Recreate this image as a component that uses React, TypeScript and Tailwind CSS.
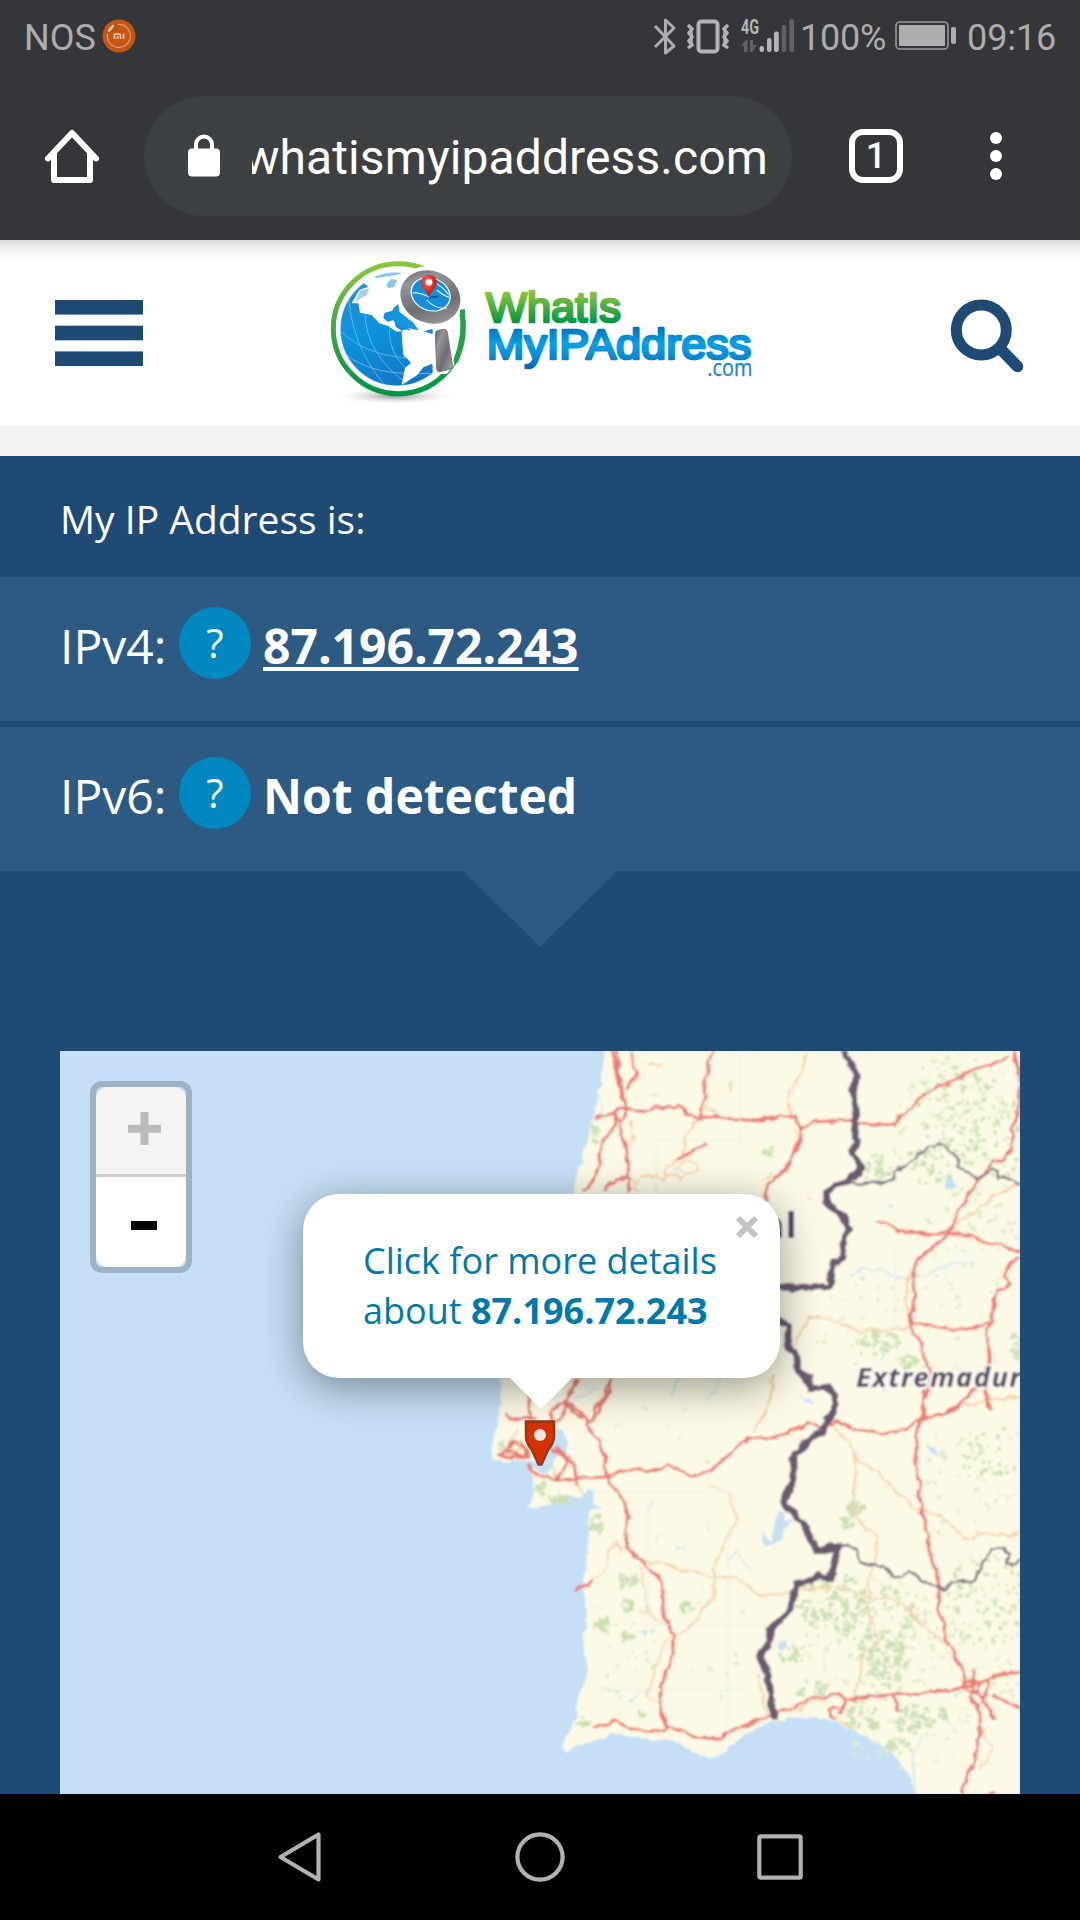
import React from "react";

/* ---------- status bar ---------- */

function StatusIcons() {
  return (
    <svg width="146" height="40" viewBox="651 16 146 40" fill="none" className="shrink-0">
      <path d="M655 26L674 46L665.5 53V20L674 28L655 47" stroke="#adadaf" strokeWidth="3" strokeLinejoin="round" />
      <rect x="698.5" y="21.5" width="19" height="30" rx="3" stroke="#b4b4b6" strokeWidth="4" />
      <path d="M688 25l4 4-3 4 3 4-3 4 3 4-4 3M728 25l-4 4 3 4-3 4 3 4-3 4 4 3" stroke="#b4b4b6" strokeWidth="3.4" />
      <path d="M692 28v19M724 28v19" stroke="#b4b4b6" strokeWidth="1.6" />
      <text x="741" y="34" fontFamily="Roboto" fontWeight="700" fontSize="20" textLength="18" lengthAdjust="spacingAndGlyphs" fill="#b4b4b6">4G</text>
      <path d="M741 46l5-6h1.500v12h-3.500v-6zM750 40h3v5h4l-5 7h-2z" fill="#616265" />
      <g fill="#b4b4b6">
        <rect x="759.500" y="46" width="4.500" height="6" rx="2" />
        <rect x="767" y="38" width="4.500" height="14" rx="2" />
        <rect x="774" y="31.500" width="4.800" height="20.500" rx="2" />
      </g>
      <g fill="#616265">
        <rect x="781.700" y="25" width="4.600" height="27" rx="2" />
        <rect x="789.300" y="19" width="4.800" height="33" rx="2" />
      </g>
    </svg>
  );
}

function Battery() {
  return (
    <svg width="62" height="30" viewBox="0 0 62 30" fill="none" className="shrink-0">
      <rect x="1" y="1" width="52" height="27" rx="4" stroke="#9a9a9c" strokeWidth="1.600" />
      <rect x="4" y="4" width="46" height="21" rx="1" fill="#adaeb0" />
      <rect x="56" y="6" width="5" height="17" rx="2" fill="#adaeb0" />
    </svg>
  );
}

function StatusBar() {
  return (
    <div className="flex h-[72px] items-center pl-[24px] text-[36px] leading-[72px] text-[#adadaf]">
      <span className="w-[74px] pt-[3px]">NOS</span>
      <svg width="34" height="34" viewBox="0 0 34 34" fill="none" className="ml-[4px] shrink-0">
        <circle cx="17" cy="17" r="16.500" fill="#c45513" />
        <path d="M16 5.500a11.500 11.500 0 1 1-10.500 9.500" stroke="#d99a74" strokeWidth="1.300" />
        <path d="M7 11.500l4-4.500" stroke="#e8d5c8" strokeWidth="2.500" strokeLinecap="round" />
        <path d="M12.500 20v-5h4.500q1.500 0 1.500 1.500V20M15.500 17v3M21.500 14.500V20" stroke="#e6cdbd" strokeWidth="1.600" />
      </svg>
      <div className="ml-[515px]"><StatusIcons /></div>
      <span className="ml-[3px] w-[95px] pt-[3px] tracking-[-0.2px]">100%</span>
      <Battery />
      <span className="ml-[10px] pt-[3px] tracking-[-0.1px]">09:16</span>
    </div>
  );
}

/* ---------- browser toolbar ---------- */

function BrowserBar() {
  return (
    <div className="flex h-[168px] items-center pb-0 pl-[42px]">
      <svg width="60" height="60" viewBox="42 126 60 60" fill="none" className="shrink-0">
        <path d="M48 158.500L72 133l24 25.500" stroke="#fff" strokeWidth="6" strokeLinecap="round" strokeLinejoin="round" />
        <path d="M54 153v27h36v-27" stroke="#fff" strokeWidth="6" strokeLinejoin="round" />
      </svg>
      <div className="ml-[42px] flex h-[120px] w-[648px] items-center rounded-full bg-[#3c4043] pl-[44px]">
        <svg width="32" height="44" viewBox="0 0 32 44" fill="none" className="shrink-0">
          <path d="M8 16V10.500a8 8 0 0 1 16 0V16" stroke="#fff" strokeWidth="4" />
          <rect x="0" y="14.500" width="32" height="28" rx="4" fill="#fff" />
        </svg>
        <div className="ml-[32px] flex w-[516px] justify-end overflow-hidden text-[48px] leading-[80px] text-white">
          <span className="whitespace-nowrap pt-[4px] tracking-[0.1px]">whatismyipaddress.com</span>
        </div>
      </div>
      <div className="ml-[57px] flex h-[54px] w-[54px] items-center justify-center rounded-[14px] border-[6px] border-white text-[36px] font-medium leading-none text-white">
        1
      </div>
      <div className="ml-[87px] flex flex-col gap-[6px]">
        <i className="h-3 w-3 rounded-full bg-white" />
        <i className="h-3 w-3 rounded-full bg-white" />
        <i className="h-3 w-3 rounded-full bg-white" />
      </div>
    </div>
  );
}

/* ---------- site header ---------- */

function Logo() {
  return (
    <svg width="480" height="180" viewBox="0 0 1440 540" className="shrink-0">
      <defs>
        <linearGradient id="ring" x1="0" y1="0" x2="0" y2="1">
          <stop offset="0" stopColor="#8cc63f" /><stop offset=".5" stopColor="#3fa648" /><stop offset="1" stopColor="#009444" />
        </linearGradient>
        <linearGradient id="ocean" x1="0" y1="0" x2=".4" y2="1">
          <stop offset="0" stopColor="#2f8bd6" /><stop offset=".55" stopColor="#0a93dc" /><stop offset="1" stopColor="#1478c8" />
        </linearGradient>
        <linearGradient id="steel" x1="0" y1="0" x2="1" y2="1">
          <stop offset="0" stopColor="#58595b" /><stop offset=".25" stopColor="#939598" /><stop offset=".6" stopColor="#6d6e71" /><stop offset="1" stopColor="#a7a9ac" />
        </linearGradient>
        <linearGradient id="green" gradientUnits="userSpaceOnUse" x1="0" y1="155" x2="0" y2="250">
          <stop offset="0" stopColor="#8cc63f" /><stop offset="1" stopColor="#009444" />
        </linearGradient>
        <linearGradient id="blue" gradientUnits="userSpaceOnUse" x1="0" y1="262" x2="0" y2="385">
          <stop offset="0" stopColor="#0071bc" /><stop offset=".4" stopColor="#0a9fe3" /><stop offset=".65" stopColor="#0b8fd8" /><stop offset="1" stopColor="#0069b4" />
        </linearGradient>
        <radialGradient id="shade"><stop offset="0" stopColor="#777" stopOpacity=".8" /><stop offset="1" stopColor="#fff" stopOpacity="0" /></radialGradient>
        <radialGradient id="red" cx=".4" cy=".3"><stop offset="0" stopColor="#ff6a5a" /><stop offset="1" stopColor="#cf1f1f" /></radialGradient>
        <clipPath id="disc"><circle cx="291" cy="267" r="171" /></clipPath>
      </defs>
      <ellipse cx="285" cy="468" rx="185" ry="27" fill="url(#shade)" />
      <circle cx="295" cy="266" r="195" fill="#fff" stroke="url(#ring)" strokeWidth="15" />
      <g clipPath="url(#disc)">
        <circle cx="291" cy="267" r="171" fill="url(#ocean)" />
        <g fill="none" stroke="#6fbcec" strokeWidth="2.500">
          <path d="M145 150Q150 310 250 430M195 215Q195 340 320 430M270 260Q260 340 335 400M125 275Q200 350 340 355M140 345Q220 410 390 400" />
        </g>
        <path d="M155 190L178 150L205 140L185 125L240 105L305 95L420 60L480 270L390 268L368 277L335 272L320 262L306 238L288 222L292 195L277 212L254 218L250 234L262 245L282 240L287 260L305 272L320 268L345 280L350 292L315 290L310 273L290 275L264 258L238 250L215 225L180 218L175 190Z" fill="#fff" />
        <path d="M305 275L345 268L410 285L480 300L450 420L395 372L370 382L352 405L320 425L305 435L315 385L333 368L310 345L307 310Z" fill="#fff" />
        <path d="M165 190L180 152L208 145L200 165L178 178Z" fill="#a9cdee" />
        <path d="M258 135l15-18 18 3-8 20-18 5zM225 105l45-8 40 1-22 7-60 10z" fill="#8dc3ec" />
        <path d="M280 205l15-14 3 25 38 27 20 28-38-8-26-10-20-20z" fill="#1596dc" />
      </g>
      <circle cx="291" cy="267" r="171" fill="none" stroke="#fff" strokeWidth="5" opacity=".5" />
      <ellipse cx="391" cy="171" rx="102" ry="91" transform="rotate(18 391 171)" fill="#fff" />
      <path d="M378 82L400 90L412 70L490 118L494 205L460 245L463 375L440 402L398 402L398 240Z" fill="#fff" />
      <path d="M487 208Q497 285 467 366" fill="none" stroke="#23a146" strokeWidth="15" />
      <ellipse cx="391" cy="171" rx="92" ry="78" transform="rotate(22 391 171)" fill="url(#steel)" />
      <ellipse cx="392" cy="163" rx="62" ry="50" transform="rotate(22 392 163)" fill="#fff" />
      <ellipse cx="392" cy="163" rx="58" ry="47" transform="rotate(22 392 163)" fill="#168fd8" />
      <path d="M338 158Q370 160 388 172M380 180Q400 204 440 206M400 126Q430 140 446 165M410 150Q432 168 448 172" fill="none" stroke="#d7effb" strokeWidth="3.500" />
      <path d="M387 173l28-4" stroke="#175b8d" strokeWidth="5" />
      <path d="M387 173C380 151 363 145 363 127A24 23 0 0 1 411 127C411 145 393 150 387 173Z" fill="url(#red)" />
      <circle cx="387" cy="127" r="10" fill="#fff" />
      <path d="M406 281Q406 273 414 271L434 268Q441 269 442 277L457 375Q458 386 449 388L419 395Q410 395 410 386Z" fill="url(#steel)" stroke="#77787b" strokeWidth="3" />
      <g fontFamily="Liberation Sans" strokeLinejoin="round" strokeLinecap="round">
        <text x="558" y="247" fontSize="126" textLength="405" lengthAdjust="spacingAndGlyphs" fill="url(#green)" stroke="url(#green)" strokeWidth="8">WhatIs</text>
        <text x="560" y="358" fontSize="126" textLength="794" lengthAdjust="spacingAndGlyphs" fill="url(#blue)" stroke="url(#blue)" strokeWidth="8">MyIPAddress</text>
      </g>
      <text x="1222" y="409" fontFamily="Open Sans" fontSize="70" textLength="135" lengthAdjust="spacingAndGlyphs" fill="#1b86cb" stroke="#1b86cb" strokeWidth="1">.com</text>
    </svg>
  );
}

function SiteHeader() {
  return (
    <header className="flex h-[186px] items-start bg-white bg-[linear-gradient(to_bottom,#dadada_0px,#efefef_7px,#fafafa_15px,#ffffff_23px)]">
      <svg width="88" height="66" viewBox="0 0 88 66" fill="#1f4a73" className="ml-[55px] mt-[60px] shrink-0">
        <rect width="88" height="14.600" />
        <rect y="25.700" width="88" height="14.600" />
        <rect y="51.400" width="88" height="14.600" />
      </svg>
      <div className="ml-[157px]"><Logo /></div>
      <svg width="76" height="76" viewBox="950 299 76 76" fill="none" stroke="#1f4a73" className="ml-[170px] mt-[59px] shrink-0">
        <circle cx="981.300" cy="330" r="25" strokeWidth="11" />
        <path d="M1001 349.500L1017.500 366.500" strokeWidth="11.500" strokeLinecap="round" />
      </svg>
    </header>
  );
}

/* ---------- address rows ---------- */

function AddressRow({ label, children }: { label: string; children: React.ReactNode }) {
  return (
    <div className="flex h-[144px] items-start bg-[#2d5a82] pl-[60px] text-[48px] text-white">
      <span className="w-[119px] whitespace-nowrap pt-[29px] font-normal leading-[80px]">{label}</span>
      <span className="mt-[30px] flex h-[72px] w-[72px] shrink-0 items-center justify-center rounded-full bg-[#0288c0] text-[40px] font-normal leading-none">?</span>
      <span className="ml-[12px] whitespace-nowrap pt-[29px] font-bold leading-[80px]">{children}</span>
    </div>
  );
}

/* ---------- map ---------- */

type Blob = [number, number, number, number, number];

/* Scatters woodland specks inside ellipses: cx, cy, rx, ry, count. */
function specks(blobs: Blob[], seed: number) {
  let s = seed;
  const rnd = () => (s = (s * 16807) % 2147483647) / 2147483647;
  let d = "";
  for (const [cx, cy, rx, ry, n] of blobs) {
    for (let i = 0; i < n; i++) {
      const a = rnd() * Math.PI * 2;
      const r = Math.sqrt(rnd());
      const w = 1.5 + rnd() * 3.5;
      const h = 1.5 + rnd() * 3;
      d += `M${(cx + Math.cos(a) * r * rx).toFixed(1)} ${(cy + Math.sin(a) * r * ry).toFixed(1)}l${w.toFixed(1)} -1l1 ${h.toFixed(1)}l-${w.toFixed(1)} 1z`;
    }
  }
  return d;
}

const denseWoods = specks([
  [956, 1115, 46, 50, 90], [880, 1165, 22, 18, 36], [1000, 1140, 26, 40, 40], [925, 1165, 30, 18, 36],
  [830, 1600, 36, 28, 110], [880, 1625, 40, 40, 100], [885, 1660, 20, 26, 90], [810, 1690, 16, 12, 26],
  [910, 1718, 22, 14, 50], [860, 1715, 18, 14, 40], [790, 1655, 14, 10, 20], [985, 1600, 40, 50, 80],
  [990, 1450, 30, 28, 34], [874, 1342, 26, 12, 40], [905, 1362, 10, 8, 26], [852, 1507, 8, 7, 24],
  [844, 1522, 8, 8, 16], [767, 1151, 6, 5, 18], [625, 1580, 10, 8, 26], [626, 1605, 8, 6, 16], [600, 1625, 8, 12, 22],
  [594, 1524, 8, 12, 18], [625, 1637, 8, 6, 12], [685, 1607, 6, 5, 14], [594, 1133, 4, 12, 22], [580, 1722, 8, 4, 12],
  [540, 1487, 5, 7, 16], [557, 1498, 12, 4, 22], [500, 1445, 5, 5, 12], [897, 1745, 14, 8, 18], [940, 1712, 5, 5, 14],
  [640, 1713, 4, 4, 8], [1016, 1345, 8, 14, 20],
], 4711);

const sparseWoods = specks([
  [955, 1110, 62, 56, 110], [960, 1250, 55, 60, 50], [900, 1330, 90, 60, 54], [980, 1650, 40, 80, 90],
  [870, 1640, 72, 66, 130], [960, 1480, 55, 60, 50], [620, 1640, 35, 60, 36], [900, 1740, 60, 30, 46],
  [730, 1640, 50, 60, 10], [680, 1440, 80, 40, 6], [980, 1210, 40, 30, 20],
], 977);

/* North block is charted on a 3:1 grid from (560,1040), south block on a 2.8:3 grid from (460,1380). */
const NORTH = "translate(560 1040) scale(0.33333)";
const SOUTH = "translate(460 1380) scale(0.35714 0.33333)";

const northRoads = [
  "M160 30L168 85L178 130L188 180L195 205", "M213 33L218 75L232 100L210 130L200 150",
  "M172 33L177 95L190 170", "M460 33L445 75L432 120L438 170L422 200L425 238",
  "M102 235L130 228L160 220L175 205L195 203L250 215L285 205L345 200L360 192L372 200L380 222L425 238L460 222L500 235L590 243L650 232L705 230L712 250L725 265L765 245L885 240L888 250L995 255L1005 258L1020 232L1045 210L1070 182L1100 158L1165 132L1220 100L1300 70L1350 50",
  "M175 208Q155 230 180 245Q200 225 195 205", "M162 225L165 255L128 310L117 345L118 385L95 430L68 460",
  "M178 250L182 285L205 340L206 460", "M132 460L138 440L165 420L200 412L215 420",
  "M725 265L722 295L700 350L680 385L650 410L620 440L620 485", "M355 360L440 310",
  "M1360 33L1380 110L1378 200L1360 260L1355 330L1330 357L1300 362L1275 400L1245 432L1220 475L1195 520L1180 550L1165 580L1080 655L1060 695L1065 760L1050 850L1062 885L1085 905L1090 945L1110 1000L1105 1050L1092 1080L1090 1130",
  "M950 545L975 553L1020 575L1080 578L1120 585L1160 575L1230 588L1275 610L1320 613L1380 632",
  "M1380 650L1340 685L1335 705L1350 730L1330 745L1310 752L1298 775L1295 845L1270 855L1240 865L1180 868L1110 855L1055 850",
  "M1295 840L1275 880L1285 920L1288 960L1280 1010L1240 1045L1190 1105L1160 1125L1080 1128",
  "M1280 1050L1282 1100L1298 1110", "M155 1015L150 1045L130 1080L120 1110L100 1140M50 1015L25 1070L10 1090L70 1140",
];
const southRoads = [
  "M190 0L195 120M335 0L305 30L300 70L272 75L255 95L255 130M300 70L285 115L265 125M300 70L335 95L358 130L372 115L380 80L403 55L410 20L425 0",
  "M125 100L140 118L190 112L215 118", "M108 225L130 215L150 180L165 200L185 210L195 235L110 228M130 215L195 235M170 178L190 235",
  "M190 255L205 275L235 290L265 300L420 290L470 270L560 268L580 250L600 262L645 287L705 272L740 235L785 190L820 172L865 178L910 162L975 130L1010 140L1060 125L1090 145L1130 150L1180 162L1240 148L1275 130L1300 108L1360 105L1400 70L1430 35L1450 20",
  "M255 205L290 230L310 232L320 260L330 320M305 235L290 270L265 300M268 200L300 235",
  "M358 130L362 150L390 180L400 210L410 240L405 280L430 320L460 365L472 410L462 450L465 505L510 545L550 585L565 620L572 700L588 750L600 775L590 850L565 910L562 980L580 1040L570 1052L500 1050L465 1040L435 1022L375 1045",
  "M580 1040L620 1055L655 1070L725 1078L750 1055L810 1030L875 1000L945 980L975 955L1020 952L1060 937L1085 962L1200 942L1290 940L1410 925L1440 910L1480 900L1520 882L1570 870",
  "M1070 940L1080 965L1065 1005M1065 980L1045 978L1033 990L1035 1010L1055 1018", "M1215 940L1228 995",
  "M1300 30L1295 105L1282 150L1275 235L1285 300L1292 390L1310 460L1322 545L1338 600L1340 690L1360 735L1357 770L1380 810L1400 860L1420 915",
  "M1440 865L1435 930L1455 940L1500 1018M1430 930L1435 965L1458 1000L1455 1060L1440 1150L1410 1210L1405 1250M1480 900L1475 940L1460 970M1490 945L1568 985",
  "M1412 905L1455 905L1450 940L1415 935Z", "M320 628L345 622L372 605", "M1470 0L1475 60L1485 90", "M1478 1240l20 2",
];
const northMinor = [
  "M740 33L735 80L715 110L685 160L688 200L690 230", "M265 72h42M512 120v40", "M215 240L212 320M225 285L218 300",
  "M430 230L400 250L375 290L372 330L355 360L320 380L312 405M228 430L240 408L290 410L310 420L320 405L350 403L362 420L380 398L415 392L410 370L375 365L350 385M220 420L225 445L240 455",
  "M460 215L435 200L430 225L460 230M210 130L240 110M700 265L715 290", "M640 395L618 420", "M740 477h15",
  "M700 920L725 870L745 835L795 828L850 855L895 875L1050 862L1080 850M1060 690L1040 720L1035 770L1050 830",
  "M635 1000L640 1060L605 1140M1380 430L1300 470L1240 520L1170 560M1190 1090L1240 1095L1275 1080L1380 1072",
];
const southMinor = [
  "M865 0L878 45L850 100L820 155", "M695 310L755 345L762 380L782 420L745 475L735 510L712 555L708 655L670 700L640 745L600 775",
  "M372 605L410 565L415 510L435 495L460 505M440 485L450 520", "M520 545L570 550L620 570L665 575L705 592L770 592L830 642L880 648L935 635L1040 620L1100 635L1165 655L1210 655L1250 680L1290 730L1370 800",
  "M505 560L520 630L525 700L575 735M575 780L545 870L540 905L520 945L562 975",
  "M1050 140L1090 185L1110 235L1170 275L1220 330L1275 385L1345 410L1415 475L1470 462L1540 465L1568 455",
  "M1110 235L1105 310L1100 370L1125 430L1165 470L1168 520L1145 600L1145 680L1158 750L1175 790L1130 820L1115 905L1100 945",
  "M835 875L840 930L860 1000M875 1000L960 990L975 965L1030 965M1460 1050L1490 1100L1480 1140L1450 1165M1060 1020L1100 1045",
  "M190 255L215 290M265 290L262 260M160 150L148 180L178 210L150 215M330 310L340 340M590 770L570 785",
];

function Roads({ paths, color, width }: { paths: string[]; color: string; width: number }) {
  return (
    <g fill="none" stroke={color} strokeWidth={width} strokeLinejoin="round">
      {paths.map((d) => <path key={d} d={d} vectorEffect="non-scaling-stroke" />)}
    </g>
  );
}

function MapCanvas() {
  return (
    <svg width="960" height="743" viewBox="60 1051 960 743" className="block">
      <defs>
        <filter id="soft" x="0" y="0" width="1" height="1"><feGaussianBlur stdDeviation="0.9" /></filter>
        {/* Slight wobble so that coast, borders and roads read as surveyed lines. */}
        <filter id="survey" filterUnits="userSpaceOnUse" x="60" y="1051" width="960" height="743">
          <feTurbulence type="fractalNoise" baseFrequency="0.09" numOctaves="2" seed="5" result="n" />
          <feDisplacementMap in="SourceGraphic" in2="n" scale="7" xChannelSelector="R" yChannelSelector="G" result="d" />
          <feGaussianBlur in="d" stdDeviation="0.8" />
        </filter>
      </defs>
      <rect x="60" y="1051" width="960" height="743" fill="#c5dff6" />
      <g filter="url(#survey)">
        <path d="M608 1030L600 1085L590 1130L577 1175L572 1195L545 1260L530 1310L508 1360L503 1378L501 1390L498 1425L492 1443L493 1458L505 1463L515 1460L528 1462L533 1477L535 1493L528 1508L545 1506L556 1503L571 1497L580 1504L587 1517L589 1530L588 1553L583 1580L585 1593L587 1613L584 1647L588 1670L585 1683L577 1700L576 1717L569 1733L560 1748L567 1753L578 1745L605 1738L610 1733L631 1737L653 1740L671 1739L689 1748L703 1757L712 1759L724 1753L746 1733L767 1723L792 1719L821 1718L839 1723L864 1735L885 1748L899 1760L910 1777L920 1810H1040V1030Z" fill="#fcfae6" />
        <g fill="#c5dff6">
          <path d="M555 1428L562 1430L568 1445L566 1455L556 1458L552 1468L546 1474L534 1468L527 1464L540 1461L548 1450Z" />
          <path d="M569 1497L580 1497L588 1488L595 1493L594 1504L602 1508L590 1510L588 1519Z" />
          <path d="M779 1509L785 1512L784 1522L793 1519L784 1530L781 1540L770 1544L765 1547L761 1531L772 1540Z" />
          <path d="M947 1180L951 1173L957 1186L952 1190L945 1189ZM928 1444l8 4 4 10-6-4zM780 1640l7 2-4 8-5-2zM887 1204l8 3-4 3zM800 1396l14 6-4 3zM640 1631l8-2-3 8z" />
        </g>
        <g fill="none" stroke="#cfe4f3" strokeWidth="1.500">
          <path d="M849 1276L865 1268L883 1271L905 1280L930 1273L955 1262L975 1263M890 1345L880 1362M748 1570L738 1552L729 1560M680 1376L672 1395M720 1380L706 1400M600 1386L570 1400L560 1410M916 1800L912 1760L922 1735M660 1535l-6 8M675 1546l10 3M706 1522l5 10M655 1500l-8 10M640 1690l-10 14M598 1095l6 10-6 16M650 1094l10-2M672 1168l14 4" />
        </g>
        <path d={sparseWoods} fill="#e0ebcd" />
        <path d={denseWoods} fill="#cbdfb4" />
        <g transform={NORTH}>
          <Roads paths={northMinor} color="#f7c8a3" width={1.8} />
          <Roads paths={northRoads} color="#e97c75" width={3} />
        </g>
        <g transform={SOUTH}>
          <Roads paths={southMinor} color="#f7cda9" width={1.8} />
          <Roads paths={southRoads} color="#e97c75" width={3} />
        </g>
        <g transform={NORTH}>
          <Roads
            paths={[
              "M840 15L870 65L892 105L880 150L890 220L880 270L895 300L875 340L905 380L865 425L825 435L800 455L800 490L845 525L868 565L850 610L848 650L820 670L810 735L760 742L640 742",
              "M640 835L685 860L683 910L712 955L712 995L745 1015L755 1045L800 1040L825 1065L828 1095L800 1140",
            ]}
            color="#6b5a70"
            width={7}
          />
          <Roads paths={["M870 430L960 432L998 420L998 395L1030 375L1070 350L1095 330L1130 315L1150 315L1195 355L1190 380L1250 415L1268 412L1300 388L1313 395L1313 412L1350 418L1395 440"]} color="#7c7180" width={2.4} />
        </g>
        <g transform={SOUTH}>
          <Roads
            paths={["M975 0L978 25L1030 22L1052 50L1048 90L1015 155L970 185L935 225L935 300L915 335L908 370L960 430L1000 515L1060 495L1038 595L1000 588L980 605L942 612L925 690L870 745L860 800L840 825L862 885L882 1020"]}
            color="#6b5a70"
            width={7}
          />
          <Roads paths={["M1060 492L1115 512L1120 545L1140 555L1190 558L1210 592L1240 590L1260 572L1290 600L1340 620L1355 630L1380 612L1440 600L1455 575L1460 545L1485 515L1520 505L1540 520L1530 552L1545 555L1580 530"]} color="#7c7180" width={2.4} />
        </g>
      </g>
      <g filter="url(#soft)">
        <path fill="none" stroke="#e4efed" d="M740 1051V1145M650 1140H740M656 1145V1195M895 1250V1350M590 1492H740M648 1500V1620M728 1530V1735M640 1625H760M600 1690H750" />
        <g fontFamily="Noto Sans" fill="#544565" stroke="#fdfbf2" strokeWidth="4" paintOrder="stroke" strokeLinejoin="round">
          <text x="798" y="1238" textAnchor="end" fontSize="36" fontWeight="700" letterSpacing="1.500">al</text>
          <text x="856" y="1387" fontSize="27.500" fontWeight="700" fontStyle="italic" textLength="182" lengthAdjust="spacing">Extremadura</text>
        </g>
      </g>
      <path d="M526 1421.500H554V1438Q553 1444 548 1450L541.500 1464.500H538.500L532 1450Q527 1444 526 1438Z" fill="#d63200" stroke="#93391a" strokeWidth="2.500" />
      <circle cx="540" cy="1435" r="6" fill="#f3e4e2" />
    </svg>
  );
}

function MapPanel() {
  return (
    <div className="relative mx-[60px] mt-[104px] h-[743px] overflow-hidden">
      <MapCanvas />
      <div className="absolute left-[30px] top-[30px] h-[192px] w-[102px] rounded-[12px] border-[6px] border-black/20 bg-clip-padding">
        <div className="flex h-[90px] items-center justify-center rounded-t-[12px] border-b-[3px] border-[#ccc] bg-[#f4f4f4] pb-[4px] pl-[6px]">
          <svg width="33" height="33" viewBox="0 0 33 33" fill="#bbb"><path d="M12.500 0h8v12.700H33v8H20.500V33h-8V20.700H0v-8h12.500z" /></svg>
        </div>
        <div className="flex h-[90px] items-center justify-center rounded-b-[12px] bg-white pl-[6px] pt-[7px]">
          <span className="h-[9px] w-[26px] bg-black" />
        </div>
      </div>
      <div className="absolute left-[243px] top-[143px] h-[184px] w-[477px] rounded-[36px] bg-white pl-[60px] pt-[42px] text-[36px] leading-[50px] text-[#0078a8] shadow-[0_9px_42px_rgba(0,0,0,0.4)]">
        <p className="whitespace-nowrap">Click for more details</p>
        <p className="whitespace-nowrap">about <b className="font-bold">87.196.72.243</b></p>
        <svg width="24" height="24" viewBox="0 0 24 24" stroke="#c3c3c3" strokeWidth="6" className="absolute right-[21px] top-[21px]">
          <path d="M3 3L21 21M21 3L3 21" />
        </svg>
        <svg width="64" height="32" viewBox="0 0 64 32" fill="#fff" className="absolute left-[206px] top-[183px]">
          <path d="M0 0H64L32 32Z" />
        </svg>
      </div>
    </div>
  );
}

/* ---------- system navigation ---------- */

function NavBar() {
  return (
    <nav className="flex h-[126px] items-center justify-center gap-[180px] bg-black">
      <svg width="60" height="60" viewBox="270 1827 60 60" fill="none" stroke="#b2b2b2" strokeWidth="4.200" strokeLinejoin="round">
        <path d="M280.500 1857L318.500 1834.500V1879.500Z" />
      </svg>
      <svg width="60" height="60" viewBox="0 0 60 60" fill="none" stroke="#b2b2b2" strokeWidth="4.200">
        <circle cx="30" cy="30" r="22.600" />
      </svg>
      <svg width="60" height="60" viewBox="0 0 60 60" fill="none" stroke="#b2b2b2" strokeWidth="4.200">
        <rect x="9.300" y="9.300" width="41.400" height="41.400" rx="1.500" />
      </svg>
    </nav>
  );
}

export default function App() {
  return (
    <div className="flex h-[1920px] w-[1080px] flex-col overflow-hidden bg-[#1f4a73]">
      <div className="bg-[#35363a] font-['Roboto',sans-serif]">
        <StatusBar />
        <BrowserBar />
      </div>
      <SiteHeader />
      <div className="h-[30px] shrink-0 bg-[#f0f2f4]" />
      <main className="flex h-[1338px] shrink-0 flex-col font-['Open_Sans',sans-serif]">
        <h1 className="h-[121px] pl-[60px] pt-[2px] text-[39px] leading-[121px] text-white">My IP Address is:</h1>
        <AddressRow label="IPv4:">
          <a className="underline decoration-[4px] underline-offset-[3px] [text-decoration-skip-ink:none]">87.196.72.243</a>
        </AddressRow>
        <div className="h-[6px] shrink-0" />
        <AddressRow label="IPv6:">Not detected</AddressRow>
        <svg width="154" height="76" viewBox="0 0 154 76" fill="#2d5a82" className="mx-auto shrink-0">
          <path d="M0 0H154L77 76Z" />
        </svg>
        <MapPanel />
      </main>
      <NavBar />
    </div>
  );
}
